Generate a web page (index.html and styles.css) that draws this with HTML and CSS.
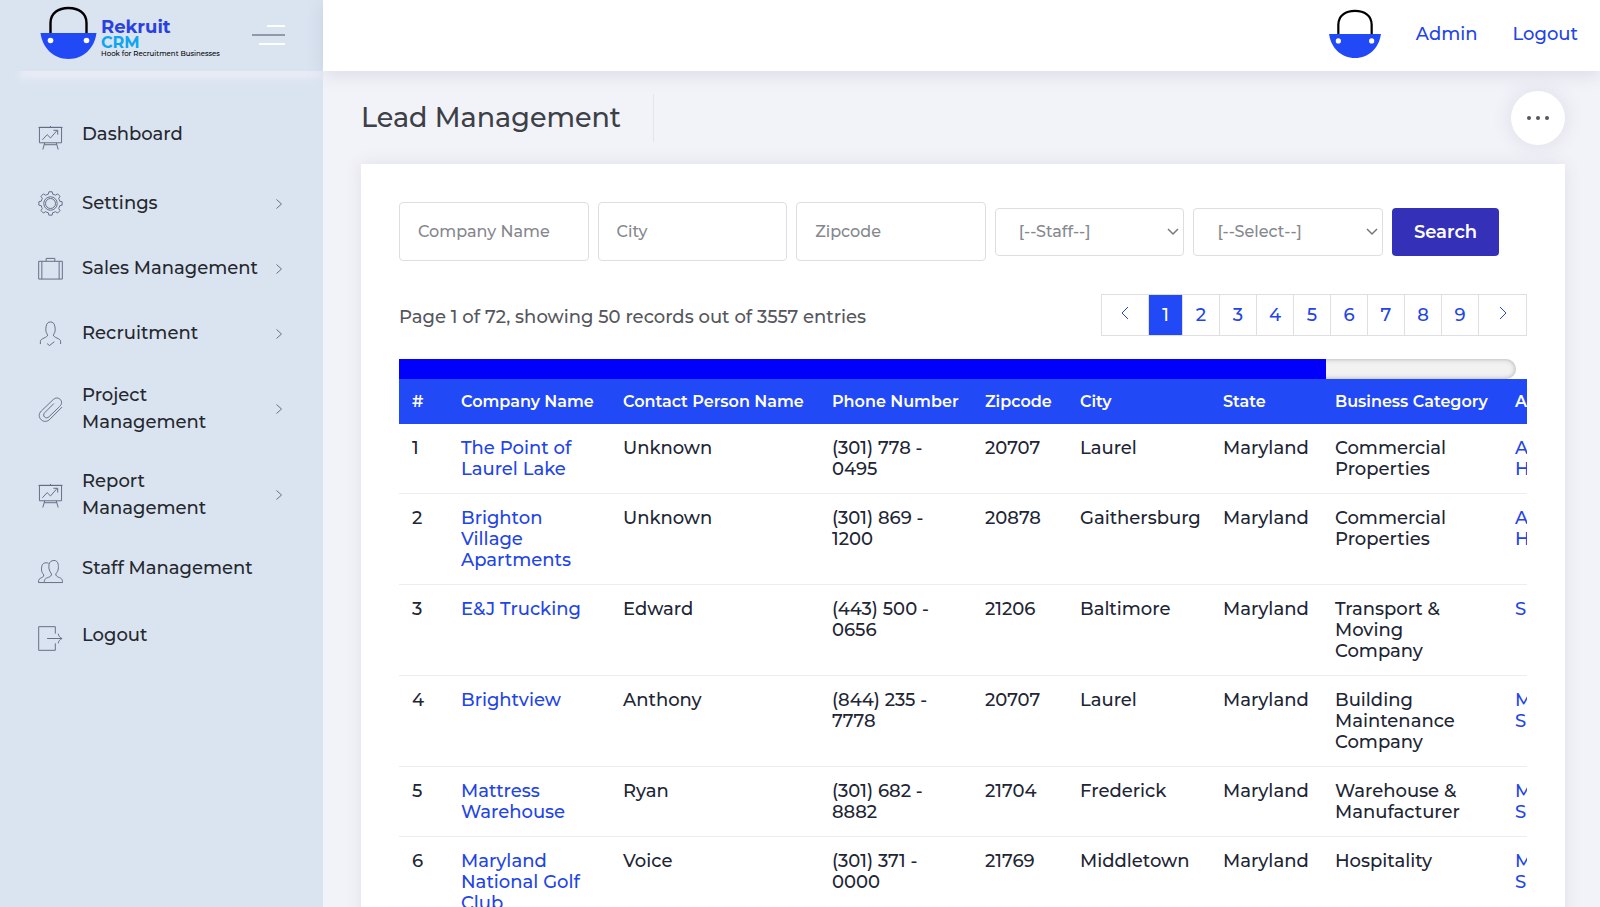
FILE: index.html
```
<!DOCTYPE html>
<html lang="en">
<head>
    <meta charset="UTF-8">
    <meta name="viewport" content="width=device-width, initial-scale=1.0">
    <title>Rekruit CRM</title>
    <link rel="stylesheet" href="styles.css">
</head>
<body>
    <!-- shared icons -->
    <svg width="0" height="0" class="sprite">
        <symbol id="bag" viewBox="0 0 56 54">
            <path d="M10 28V17C10 7 18 2 28 2s18 5 18 15v11" fill="none" stroke="#000" stroke-width="2.4"/>
            <path d="M0 27h56c-2 15-13 26-28 26S2 42 0 27z" fill="#2149f5"/>
            <circle cx="10" cy="34.500" r="2.800" fill="#fff"/>
            <circle cx="46" cy="34.500" r="2.800" fill="#fff"/>
        </symbol>
        <symbol id="chart" viewBox="0 0 26 26">
            <path d="M1.500 2.500h23v16h-23zM.5 2.500h25M13 1v1.500M7 18.500 5 25.500M19 18.500l2 7M6.500 20.500h13M4.500 15.500l5-5.500 3.500 3.500 7-8M16 5.500h4.500V10"/>
        </symbol>
        <symbol id="gear" viewBox="0 0 26 26">
            <path d="M11.300.8h3.400l.6 2.500q1.500.3 2.800 1.100l2.300-1.400 2.500 2.500-1.400 2.300q.8 1.300 1.100 2.800l2.500.6v3.500l-2.500.6q-.3 1.500-1.100 2.800l1.400 2.300-2.500 2.500-2.300-1.400q-1.300.8-2.800 1.100l-.6 2.500h-3.400l-.6-2.500q-1.500-.3-2.800-1.100l-2.300 1.400-2.500-2.500 1.400-2.300q-.8-1.300-1.100-2.800l-2.500-.6v-3.500l2.500-.6q.3-1.500 1.100-2.800L3.100 5.500 5.600 3l2.300 1.400q1.300-.8 2.800-1.100z"/>
            <circle cx="13" cy="13" r="7"/>
            <circle cx="13" cy="13" r="5.200"/>
        </symbol>
        <symbol id="case" viewBox="0 0 26 26">
            <path d="M.7 5.500h24.600v18.500H.7zM4 5.500V24M22 5.500V24M8.500 5.500v-3h9v3"/>
        </symbol>
        <symbol id="person" viewBox="0 0 26 26">
            <path d="M2.500 24v-3c0-3 7.500-3.500 7.500-6.500C7.500 11 8 8 8.500 5.500 9 2.500 10.500 1 13 1s4 1.500 4.500 4.500c.5 2.500 1 5.500-1.500 9 0 3 7.500 3.500 7.500 6.500v3M9.500 23.500l2.500 2 5-4"/>
        </symbol>
        <symbol id="clip" viewBox="0 0 26 26">
            <path d="M25 10.500 12.500 23c-3 3-6.500 3-9 .8C.5 21 .5 17.500 3.500 14.500L15.500 3c2.500-2.500 5.500-2.500 7.500-.6 2.200 2.200 2 5-.5 7.500L11.500 20.500c-1.500 1.500-3.500 1.500-4.700.3s-1.300-3 .2-4.500l9.500-9.500"/>
        </symbol>
        <symbol id="people" viewBox="0 0 26 26">
            <path d="M6.500 24.500H25.500c0-4-1.500-4.500-4-5.500-2-.8-3-1.500-3-3.500 3-3.500 3-7 2.500-10-.5-2.500-2-4-4.500-4s-4.500 1.500-5 4c-.5 3-.3 6.500 2.500 10 0 2-1 2.700-3 3.500-3 1-4.500 1.500-4.500 5.500zM6.500 24.500h-6c0-3.500 1-4 3-5 1.500-.7 2.500-1 2.500-3-3-3.500-2.500-6.500-2-9 .5-3 3.500-4.500 7-3"/>
        </symbol>
        <symbol id="exit" viewBox="0 0 26 26">
            <path d="M18 8V.7H.7v24.600H18V18M9.500 13h15.500M21 8c.5 2.500 1.800 4.200 4 5-2.200.8-3.500 2.500-4 5"/>
        </symbol>
        <symbol id="chev" viewBox="0 0 8 12">
            <path d="M1.500 1.500 6.500 6l-5 4.500"/>
        </symbol>
        <symbol id="chev-left" viewBox="0 0 8 14">
            <path d="M7 1 1 7l6 6"/>
        </symbol>
        <symbol id="chev-right" viewBox="0 0 8 14">
            <path d="M1 1l6 6-6 6"/>
        </symbol>
    </svg>

    <aside class="sidebar">
        <div class="brand">
            <a href="#" class="logo">
                <svg class="logo-bag"><use href="#bag"/></svg>
                <span class="logo-text">
                    <span class="logo-name">Rekruit</span>
                    <span class="logo-crm">CRM</span>
                    <span class="logo-tag">Hook for Recruitment Businesses</span>
                </span>
            </a>
            <button class="toggle" aria-label="Toggle menu"><span></span><span></span><span></span></button>
        </div>
        <nav class="menu">
            <a href="#" class="item plain"><svg class="icon"><use href="#chart"/></svg><span>Dashboard</span></a>
            <a href="#" class="item"><svg class="icon"><use href="#gear"/></svg><span>Settings</span><svg class="arrow"><use href="#chev"/></svg></a>
            <a href="#" class="item"><svg class="icon"><use href="#case"/></svg><span>Sales Management</span><svg class="arrow"><use href="#chev"/></svg></a>
            <a href="#" class="item"><svg class="icon"><use href="#person"/></svg><span>Recruitment</span><svg class="arrow"><use href="#chev"/></svg></a>
            <a href="#" class="item"><svg class="icon"><use href="#clip"/></svg><span>Project Management</span><svg class="arrow"><use href="#chev"/></svg></a>
            <a href="#" class="item"><svg class="icon"><use href="#chart"/></svg><span>Report Management</span><svg class="arrow"><use href="#chev"/></svg></a>
            <a href="#" class="item plain"><svg class="icon"><use href="#people"/></svg><span>Staff Management</span></a>
            <a href="#" class="item plain"><svg class="icon"><use href="#exit"/></svg><span>Logout</span></a>
        </nav>
    </aside>

    <div class="page">
        <header class="topbar">
            <svg class="avatar"><use href="#bag"/></svg>
            <a href="#">Admin</a>
            <a href="#">Logout</a>
        </header>

        <main class="content">
            <div class="title-row">
                <h1>Lead Management</h1>
                <button class="more" aria-label="More"><span></span><span></span><span></span></button>
            </div>

            <section class="card">
                <form class="filters">
                    <input type="text" placeholder="Company Name" aria-label="Company Name">
                    <input type="text" placeholder="City" aria-label="City">
                    <input type="text" placeholder="Zipcode" aria-label="Zipcode">
                    <div class="select">
                        <select aria-label="Staff"><option>[--Staff--]</option></select>
                        <svg viewBox="0 0 12 8"><path d="M1 1l5 5 5-5"/></svg>
                    </div>
                    <div class="select">
                        <select aria-label="Select"><option>[--Select--]</option></select>
                        <svg viewBox="0 0 12 8"><path d="M1 1l5 5 5-5"/></svg>
                    </div>
                    <button type="button" class="search">Search</button>
                </form>

                <div class="summary">
                    <p>Page 1 of 72, showing 50 records out of 3557 entries</p>
                    <nav class="pager">
                        <a href="#" class="step" aria-label="Previous"><svg><use href="#chev-left"/></svg></a>
                        <a href="#" class="active">1</a>
                        <a href="#">2</a>
                        <a href="#">3</a>
                        <a href="#">4</a>
                        <a href="#">5</a>
                        <a href="#">6</a>
                        <a href="#">7</a>
                        <a href="#">8</a>
                        <a href="#">9</a>
                        <a href="#" class="step" aria-label="Next"><svg><use href="#chev-right"/></svg></a>
                    </nav>
                </div>

                <div class="scroll-track"><div class="scroll-thumb"></div></div>
                <div class="table-wrap">
                    <table>
                        <colgroup>
                            <col class="c-num"><col class="c-company"><col class="c-contact"><col class="c-phone"><col class="c-zip"><col class="c-city"><col class="c-state"><col class="c-category"><col>
                        </colgroup>
                        <thead>
                            <tr>
                                <th>#</th>
                                <th>Company Name</th>
                                <th>Contact Person Name</th>
                                <th>Phone Number</th>
                                <th>Zipcode</th>
                                <th>City</th>
                                <th>State</th>
                                <th>Business Category</th>
                                <th>A</th>
                            </tr>
                        </thead>
                        <tbody>
                            <tr>
                                <td>1</td>
                                <td><a href="#">The Point of Laurel Lake</a></td>
                                <td>Unknown</td>
                                <td>(301) 778 -<br>0495</td>
                                <td>20707</td>
                                <td>Laurel</td>
                                <td>Maryland</td>
                                <td>Commercial Properties</td>
                                <td><a href="#">A<br>H</a></td>
                            </tr>
                            <tr>
                                <td>2</td>
                                <td><a href="#">Brighton<br>Village Apartments</a></td>
                                <td>Unknown</td>
                                <td>(301) 869 -<br>1200</td>
                                <td>20878</td>
                                <td>Gaithersburg</td>
                                <td>Maryland</td>
                                <td>Commercial Properties</td>
                                <td><a href="#">A<br>H</a></td>
                            </tr>
                            <tr>
                                <td>3</td>
                                <td><a href="#">E&amp;J Trucking</a></td>
                                <td>Edward</td>
                                <td>(443) 500 -<br>0656</td>
                                <td>21206</td>
                                <td>Baltimore</td>
                                <td>Maryland</td>
                                <td>Transport &amp;<br>Moving<br>Company</td>
                                <td><a href="#">S</a></td>
                            </tr>
                            <tr>
                                <td>4</td>
                                <td><a href="#">Brightview</a></td>
                                <td>Anthony</td>
                                <td>(844) 235 -<br>7778</td>
                                <td>20707</td>
                                <td>Laurel</td>
                                <td>Maryland</td>
                                <td>Building<br>Maintenance Company</td>
                                <td><a href="#">M<br>S</a></td>
                            </tr>
                            <tr>
                                <td>5</td>
                                <td><a href="#">Mattress Warehouse</a></td>
                                <td>Ryan</td>
                                <td>(301) 682 -<br>8882</td>
                                <td>21704</td>
                                <td>Frederick</td>
                                <td>Maryland</td>
                                <td>Warehouse &amp; Manufacturer</td>
                                <td><a href="#">M<br>S</a></td>
                            </tr>
                            <tr>
                                <td>6</td>
                                <td><a href="#">Maryland National Golf Club</a></td>
                                <td>Voice</td>
                                <td>(301) 371 -<br>0000</td>
                                <td>21769</td>
                                <td>Middletown</td>
                                <td>Maryland</td>
                                <td>Hospitality</td>
                                <td><a href="#">M<br>S</a></td>
                            </tr>
                        </tbody>
                    </table>
                </div>
            </section>
        </main>
    </div>
</body>
</html>
```
FILE: styles.css
```
* {
    box-sizing: border-box;
}

body {
    margin: 0;
    display: flex;
    height: 100vh;
    overflow: hidden;
    font-family: Montserrat, Inter, sans-serif;
    font-size: 18px;
    font-weight: 500;
    color: #212534;
    background-color: #f2f3f8;
}

a {
    color: #2244e8;
    text-decoration: none;
}

button, input, select {
    font: inherit;
}

svg {
    flex: none;
    fill: none;
}

.sprite {
    position: absolute;
}

/* sidebar */
.sidebar {
    width: 323px;
    flex: none;
    overflow: hidden;
    background-color: #dae4f0;
}

.brand {
    display: flex;
    justify-content: space-between;
    align-items: center;
    height: 71px;
    padding: 0 38px 2px 40px;
    background-color: #dae4f0;
    box-shadow: 20px 8px 6px #e8ebf6;
}

.logo {
    display: flex;
    gap: 4px;
    padding-bottom: 4px;
}

.logo-bag {
    width: 57px;
    height: 54px;
}

.logo-text {
    display: flex;
    flex-direction: column;
    padding-top: 12px;
}

.logo-name, .logo-crm {
    font-size: 18px;
    line-height: 18px;
    font-weight: 700;
    color: #2a41e0;
}

.logo-crm {
    font-size: 16px;
    line-height: 14px;
    color: #0da6f0;
}

.logo-tag {
    font-size: 7px;
    line-height: 8px;
    font-weight: 500;
    color: #000;
    white-space: nowrap;
}

.toggle {
    display: flex;
    flex-direction: column;
    align-items: flex-end;
    gap: 7px;
    padding: 0;
    border: 0;
    background: none;
}

.toggle span {
    width: 18px;
    height: 2px;
    background-color: #fff;
}

.toggle span:nth-child(2) {
    width: 33px;
    background-color: #8f99a8;
}

.toggle span:nth-child(3) {
    width: 26px;
}

.menu {
    padding: 33px 40px 0 38px;
}

.item {
    display: flex;
    align-items: center;
    min-height: 65px;
    padding: 16px 0;
    line-height: 27px;
    color: #26282f;
}

.item span {
    max-width: 180px;
}

.plain {
    min-height: 67px;
}

.plain span {
    padding-bottom: 6px;
}

.icon {
    width: 25px;
    height: 25px;
    margin-right: 19px;
    stroke: #5f6c82;
}

.arrow {
    width: 8px;
    height: 12px;
    margin-left: auto;
    stroke: #66707f;
}

/* top bar */
.page {
    flex: 1;
    min-width: 0;
}

.topbar {
    position: relative;
    display: flex;
    align-items: center;
    justify-content: flex-end;
    gap: 35px;
    height: 71px;
    padding: 0 22px 3px;
    background-color: #fff;
    box-shadow: 0 4px 16px rgba(69, 65, 120, 0.13);
}

.avatar {
    width: 52px;
    height: 50px;
}

.content {
    padding: 19px 35px 0 38px;
}

.title-row {
    display: flex;
    justify-content: space-between;
    align-items: center;
    height: 55px;
    margin-bottom: 19px;
}

h1 {
    margin: 0;
    padding-right: 32px;
    border-right: 1px solid #e3e4ec;
    font-size: 27px;
    line-height: 48px;
    font-weight: 500;
    color: #3d4047;
}

.more {
    display: flex;
    justify-content: center;
    align-items: center;
    gap: 5px;
    width: 54px;
    height: 54px;
    padding: 0;
    border: 0;
    border-radius: 50%;
    background-color: #fff;
    box-shadow: 0 0 20px rgba(69, 65, 120, 0.13);
}

.more span {
    width: 4px;
    height: 4px;
    border-radius: 50%;
    background-color: #55575f;
}

.card {
    padding: 38px;
    background-color: #fff;
    box-shadow: 0 0 16px rgba(69, 65, 120, 0.1);
}

/* search form */
.filters {
    display: grid;
    grid-template-columns: repeat(5, 1fr) 107px;
    align-items: center;
    gap: 9px;
    margin-right: 28px;
}

.filters input, .select {
    width: 100%;
    min-width: 0;
    height: 59px;
    border: 1px solid #dddee2;
    border-radius: 4px;
    background-color: #fff;
    font-size: 16px;
}

.filters input {
    padding: 0 18px;
}

.filters input::placeholder {
    color: #85888d;
    opacity: 1;
}

.filters .select {
    position: relative;
    height: 48px;
}

.select select {
    width: 100%;
    height: 100%;
    padding: 0 23px;
    border: 0;
    background: none;
    appearance: none;
    color: #85888d;
}

.select svg {
    position: absolute;
    top: 19px;
    right: 4px;
    width: 12px;
    height: 8px;
    stroke: #777;
    stroke-width: 1.5;
}

.search {
    height: 48px;
    padding: 0;
    border: 0;
    border-radius: 4px;
    background-color: #3430b8;
    color: #fff;
    font-weight: 600;
}

/* page count and pager */
.summary {
    display: flex;
    justify-content: space-between;
    align-items: center;
    margin: 33px 0 23px;
}

.summary p {
    margin: 3px 0 0;
    color: #55575d;
}

.pager {
    display: flex;
    height: 42px;
    border: 1px solid #dfdfe2;
}

.pager a {
    display: flex;
    justify-content: center;
    align-items: center;
    width: 37px;
    border-right: 1px solid #dfdfe2;
}

.pager .step {
    width: 47px;
    padding-bottom: 4px;
}

.pager .active {
    width: 34px;
    background-color: #2149f5;
    color: #fff;
}

.pager a:last-child {
    border-right: 0;
}

.pager svg {
    width: 8px;
    height: 14px;
    stroke: #2244e8;
}

/* table */
.scroll-track {
    width: 99%;
    height: 20px;
    border-radius: 0 10px 10px 0;
    background-color: #f2f2f2;
    box-shadow: inset 0 0 5px #aaa;
}

.scroll-thumb {
    width: 83%;
    height: 100%;
    background-color: #0000fb;
}

.table-wrap {
    overflow: hidden;
}

table {
    width: 1374px;
    table-layout: fixed;
    border-collapse: separate;
    border-spacing: 0;
    line-height: 21px;
}

th {
    height: 45px;
    padding: 0 0 0 13px;
    background-color: #2149f5;
    color: #fff;
    font-size: 16px;
    font-weight: 600;
    text-align: left;
    white-space: nowrap;
}

td {
    padding: 14px 13px 13px;
    border-bottom: 1px solid #ebedf2;
    vertical-align: top;
}

.c-num {
    width: 49px;
}

.c-company {
    width: 162px;
}

.c-contact {
    width: 209px;
}

.c-phone {
    width: 153px;
}

.c-zip {
    width: 95px;
}

.c-city {
    width: 143px;
}

.c-state {
    width: 112px;
}

.c-category {
    width: 180px;
}
```
